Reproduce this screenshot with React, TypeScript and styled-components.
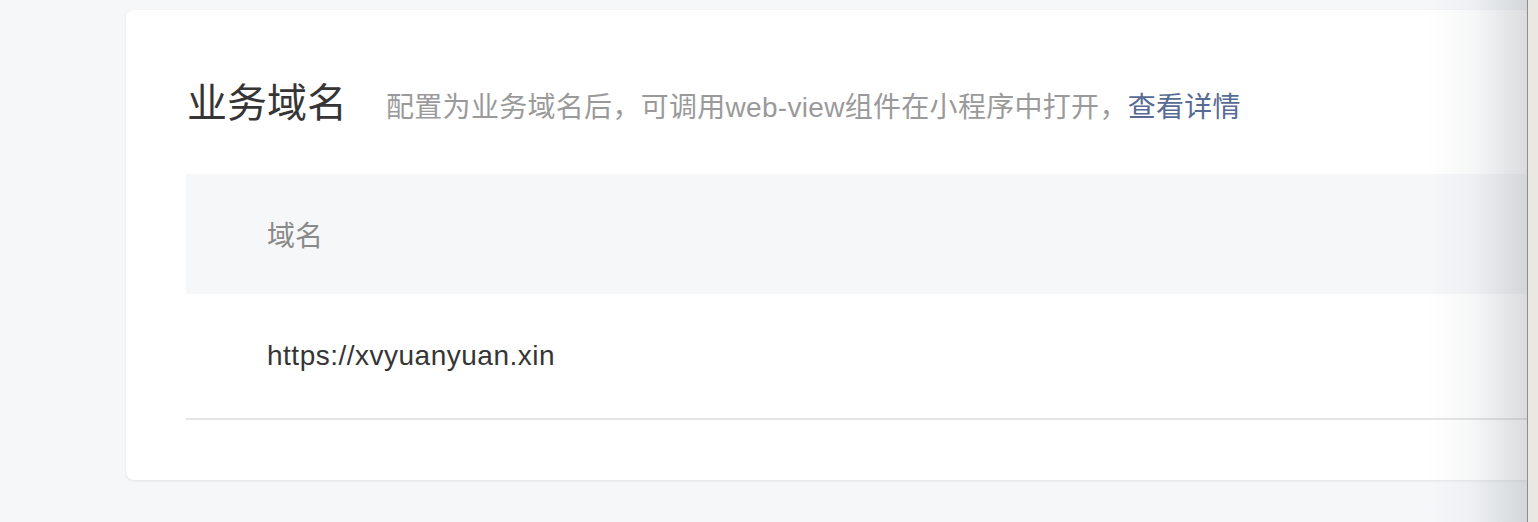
import React from "react";
import styled, { createGlobalStyle } from "styled-components";

const GlobalStyle = createGlobalStyle`
  html, body {
    margin: 0;
    padding: 0;
    background: #f5f7f9;
    overflow: hidden;
  }
  body {
    font-family: "Liberation Sans", "Noto Sans CJK SC", sans-serif;
  }
`;

const Page = styled.div`
  width: 1538px;
  height: 522px;
  box-sizing: border-box;
  padding: 10px 0 0 126px;
  overflow: hidden;
  position: relative;
`;

const Card = styled.section`
  width: 1480px;
  box-sizing: border-box;
  background: #ffffff;
  border-radius: 8px;
  box-shadow: 0 1px 3px rgba(0, 0, 0, 0.08);
  padding: 62px 60px 60px 60px;
`;

const Heading = styled.div`
  display: flex;
  align-items: baseline;
  gap: 39px;
  margin-bottom: 46px;
  padding-left: 1px;
`;

const Title = styled.h2`
  margin: 0;
  font-weight: normal;
  font-size: 40px;
  line-height: 56px;
  color: #353535;
  font-family: "Noto Sans CJK SC", sans-serif;
`;

const Tip = styled.p`
  margin: 0;
  font-size: 28px;
  line-height: 40px;
  letter-spacing: 0.3px;
  color: #9a9a9a;
  font-family: "Liberation Sans", "Noto Sans CJK SC", sans-serif;
`;

const Link = styled.a`
  color: #576b95;
  text-decoration: none;
`;

const Table = styled.div`
  display: flex;
  flex-direction: column;
`;

const HeadRow = styled.div`
  display: flex;
  align-items: center;
  height: 120px;
  background: #f6f7f9;
  padding-left: 81px;
`;

const HeadCell = styled.span`
  font-size: 28px;
  color: #8a8a8a;
  font-family: "Noto Sans CJK SC", sans-serif;
`;

const BodyRow = styled.div`
  display: flex;
  align-items: center;
  height: 124px;
  padding-left: 81px;
  border-bottom: 2px solid #e5e5e5;
`;

const Cell = styled.span`
  font-size: 28px;
  font-family: "Liberation Sans", "Noto Sans CJK SC", sans-serif;
  letter-spacing: 0.5px;
  color: #353535;
`;

const EdgeShade = styled.div`
  position: absolute;
  top: 0;
  bottom: 0;
  right: 11px;
  width: 100px;
  background: linear-gradient(
    to right,
    rgba(120, 128, 136, 0) 0%,
    rgba(120, 128, 136, 0.06) 45%,
    rgba(120, 128, 136, 0.28) 100%
  );
  pointer-events: none;
`;

const EdgeStrip = styled.div`
  position: absolute;
  top: 0;
  bottom: 0;
  right: 0;
  width: 10px;
  background: #ebe8e4;
  border-left: 1px solid #8e8e8e;
`;

export default function App() {
  return (
    <>
      <GlobalStyle />
      <Page>
        <Card>
          <Heading>
            <Title>业务域名</Title>
            <Tip>
              配置为业务域名后，可调用web-view组件在小程序中打开，
              <Link href="#">查看详情</Link>
            </Tip>
          </Heading>
          <Table>
            <HeadRow>
              <HeadCell>域名</HeadCell>
            </HeadRow>
            <BodyRow>
              <Cell>https://xvyuanyuan.xin</Cell>
            </BodyRow>
          </Table>
        </Card>
        <EdgeShade />
        <EdgeStrip />
      </Page>
    </>
  );
}
